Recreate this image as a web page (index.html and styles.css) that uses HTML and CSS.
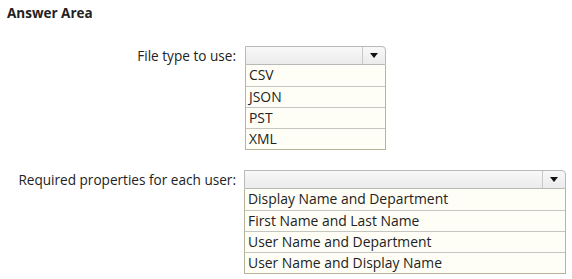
FILE: index.html
```html
<!DOCTYPE html>
<html lang="en">
<head>
	<meta charset="UTF-8">
	<title>Answer Area</title>
	<link rel="stylesheet" href="styles.css">
</head>
<body>
	<h1 class="title">Answer Area</h1>

	<div class="question q1">
		<div class="label">File type to use:</div>
		<div class="drop narrow">
			<div class="select"><span class="arrow"><i></i></span></div>
			<ul class="list">
				<li>CSV</li>
				<li>JSON</li>
				<li>PST</li>
				<li>XML</li>
			</ul>
		</div>
	</div>

	<div class="question q2">
		<div class="label">Required properties for each user:</div>
		<div class="drop wide">
			<div class="select"><span class="arrow"><i></i></span></div>
			<ul class="list">
				<li>Display Name and Department</li>
				<li>First Name and Last Name</li>
				<li>User Name and Department</li>
				<li>User Name and Display Name</li>
			</ul>
		</div>
	</div>
</body>
</html>
```

FILE: styles.css
```css
html{
	background:#fff;
	color:#222;
}
body{
	margin:0;
	padding:5px 0 0 7px;
	font-family:"Open Sans", "Noto Sans", sans-serif;
	font-size:13.6px;
}
.title{
	margin:0;
	font-size:13.5px;
	font-weight:bold;
	line-height:17px;
}
.question{
	display:grid;
	grid-template-columns:229px auto;
	column-gap:8px;
	align-items:start;
}
.q1{margin-top:24px;}
.q1 .drop{margin-left:1px;}
.q2{margin-top:20px;}
.label{
	text-align:right;
	line-height:19px;
}
.drop.narrow{width:141px;}
.drop.wide{width:322px;}
.select{
	height:17px;
	border:1px solid #b9b9b9;
	border-radius:0 4px 0 0;
	background:linear-gradient(#f8f8f8,#ebebeb);
	display:flex;
	justify-content:flex-end;
}
.arrow{
	width:22px;
	border-left:1px solid #c9c9c9;
	display:flex;
	align-items:center;
	justify-content:center;
}
.arrow i{
	width:0;
	height:0;
	border-left:4.5px solid transparent;
	border-right:4.5px solid transparent;
	border-top:5px solid #111;
}
.list{
	list-style:none;
	margin:0;
	padding:0;
	border:1px solid #b7b49c;
	border-top:none;
	background:#fffef6;
	font-size:13.9px;
}
.list li{
	height:20px;
	line-height:20px;
	padding-left:3px;
	border-top:1px solid #c6c6c0;
}
.list li:first-child{border-top:none;height:21px;}
```
